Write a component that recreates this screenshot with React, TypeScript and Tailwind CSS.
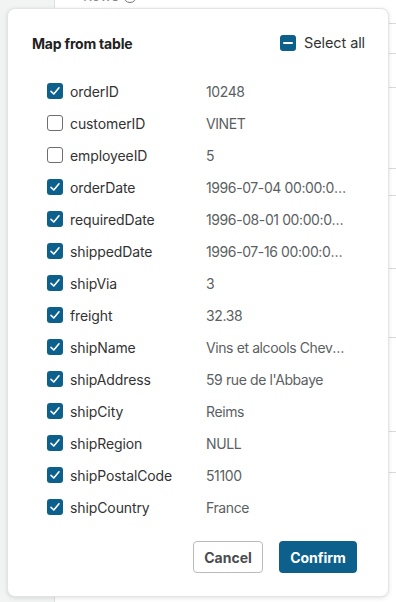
import React from "react";

const rows: [string, string, boolean][] = [
  ["orderID", "10248", true],
  ["customerID", "VINET", false],
  ["employeeID", "5", false],
  ["orderDate", "1996-07-04 00:00:00.000", true],
  ["requiredDate", "1996-08-01 00:00:00.000", true],
  ["shippedDate", "1996-07-16 00:00:00.000", true],
  ["shipVia", "3", true],
  ["freight", "32.38", true],
  ["shipName", "Vins et alcools Chevalier", true],
  ["shipAddress", "59 rue de l'Abbaye", true],
  ["shipCity", "Reims", true],
  ["shipRegion", "NULL", true],
  ["shipPostalCode", "51100", true],
  ["shipCountry", "France", true],
];

function Check({ checked }: { checked: boolean }) {
  if (!checked)
    return (
      <span className="w-4 h-4 rounded-[3px] border-[1.5px] border-[#6b6e72] bg-white shrink-0" />
    );
  return (
    <span className="w-4 h-4 rounded-[3px] bg-[#0d5f8c] shrink-0 flex items-center justify-center">
      <svg width="12" height="12" viewBox="0 0 12 12" fill="none">
        <path d="M2 6.3 L4.8 9 L10 2.8" stroke="white" strokeWidth="1.6" strokeLinecap="round" strokeLinejoin="round" />
      </svg>
    </span>
  );
}

export default function App() {
  const lineYs = [23, 53, 87, 168, 195, 268, 337, 431, 472];
  return (
    <div className="relative w-[396px] h-[602px] overflow-hidden bg-white" style={{ fontFamily: "Inter, 'Noto Sans', sans-serif" }}>
      <div className="flex h-full">
        <div className="w-[55px] h-full bg-[#f2f3f3] border-r border-[#dcdede]" />
        <div className="flex-1 relative">
          <div className="-mt-[15px] ml-[28px] flex items-center gap-1 text-[14px] text-[#888]">
            <span>Rows</span>
            <span className="w-[14px] h-[14px] rounded-full border-[1.5px] border-[#777]" />
          </div>
          {lineYs.map((y) => (
            <div key={y} className="absolute right-0 w-[10px] h-px bg-[#d8d9da]" style={{ top: y }} />
          ))}
        </div>
      </div>

      <div className="absolute left-[7px] top-[8px] w-[382px] h-[589px] bg-white rounded-[8px] border border-[#e3e4e5] shadow-[0_1px_4px_rgba(0,0,0,0.12)] pt-[18px] pl-[24px] pr-[23px] flex flex-col">
        <div className="h-[32px] flex items-center justify-between">
          <span className="text-[14px] font-bold text-[#222] tracking-[-0.2px]">Map from table</span>
          <div className="flex items-center gap-[8px]">
            <span className="w-4 h-4 rounded-[3px] bg-[#0d5f8c] flex items-center justify-center">
              <span className="w-[10px] h-[2px] bg-white rounded-[1px]" />
            </span>
            <span className="text-[14.5px] text-[#333] tracking-[-0.1px]">Select all</span>
          </div>
        </div>
        <div className="mt-[16px] pl-[15px] flex flex-col">
          {rows.map(([name, val, checked]) => (
            <div key={name} className="h-[32px] flex items-center">
              <Check checked={checked} />
              <span className="ml-[7px] w-[136px] text-[14px] text-[#333] tracking-[-0.1px]">{name}</span>
              <span className="w-[142px] text-[14px] text-[#5c5f62] truncate tracking-[-0.4px]">{val}</span>
            </div>
          ))}
        </div>
        <div className="mt-[18px] flex justify-end gap-[16px] pr-[8px]">
          <button className="w-[70px] h-[32px] rounded-[4px] border border-[#b8babc] bg-white text-[14px] font-bold text-[#4a4d50]">Cancel</button>
          <button className="w-[78px] h-[32px] rounded-[4px] bg-[#0d5f8c] text-[14px] font-bold text-white">Confirm</button>
        </div>
      </div>
    </div>
  );
}
